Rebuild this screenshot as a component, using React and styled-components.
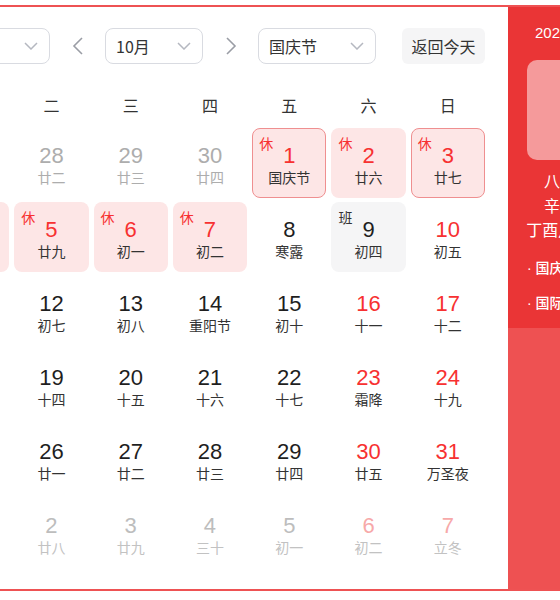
import React from "react";
import styled, { createGlobalStyle } from "styled-components";

const GlobalStyle = createGlobalStyle`
  html, body {
    margin: 0;
    padding: 0;
    overflow: hidden;
    background: #fff;
  }
  body {
    font-family: "Liberation Sans", "Noto Sans CJK SC", sans-serif;
  }
`;

const weekdays = ["一", "二", "三", "四", "五", "六", "日"];

// kind: p = previous month, c = current, n = next month
const rows = [
  [
    { d: 27, l: "廿一", k: "p" },
    { d: 28, l: "廿二", k: "p" },
    { d: 29, l: "廿三", k: "p" },
    { d: 30, l: "廿四", k: "p" },
    { d: 1, l: "国庆节", k: "c", red: true, tag: "休", ring: true },
    { d: 2, l: "廿六", k: "c", red: true, tag: "休" },
    { d: 3, l: "廿七", k: "c", red: true, tag: "休", ring: true },
  ],
  [
    { d: 4, l: "廿八", k: "c", red: true, tag: "休" },
    { d: 5, l: "廿九", k: "c", red: true, tag: "休" },
    { d: 6, l: "初一", k: "c", red: true, tag: "休" },
    { d: 7, l: "初二", k: "c", red: true, tag: "休" },
    { d: 8, l: "寒露", k: "c" },
    { d: 9, l: "初四", k: "c", tag: "班" },
    { d: 10, l: "初五", k: "c", red: true },
  ],
  [
    { d: 11, l: "初六", k: "c" },
    { d: 12, l: "初七", k: "c" },
    { d: 13, l: "初八", k: "c" },
    { d: 14, l: "重阳节", k: "c" },
    { d: 15, l: "初十", k: "c" },
    { d: 16, l: "十一", k: "c", red: true },
    { d: 17, l: "十二", k: "c", red: true },
  ],
  [
    { d: 18, l: "十三", k: "c" },
    { d: 19, l: "十四", k: "c" },
    { d: 20, l: "十五", k: "c" },
    { d: 21, l: "十六", k: "c" },
    { d: 22, l: "十七", k: "c" },
    { d: 23, l: "霜降", k: "c", red: true },
    { d: 24, l: "十九", k: "c", red: true },
  ],
  [
    { d: 25, l: "二十", k: "c" },
    { d: 26, l: "廿一", k: "c" },
    { d: 27, l: "廿二", k: "c" },
    { d: 28, l: "廿三", k: "c" },
    { d: 29, l: "廿四", k: "c" },
    { d: 30, l: "廿五", k: "c", red: true },
    { d: 31, l: "万圣夜", k: "c", red: true },
  ],
  [
    { d: 1, l: "廿七", k: "n" },
    { d: 2, l: "廿八", k: "n" },
    { d: 3, l: "廿九", k: "n" },
    { d: 4, l: "三十", k: "n" },
    { d: 5, l: "初一", k: "n" },
    { d: 6, l: "初二", k: "n", red: true },
    { d: 7, l: "立冬", k: "n", red: true },
  ],
];

function numberColor(cell) {
  if (cell.k === "p") return "#adadad";
  if (cell.k === "n") return cell.red ? "#f7a9a9" : "#bdbdbd";
  return cell.red ? "#f73131" : "#1f1f1f";
}

function lunarColor(cell) {
  if (cell.k === "p") return "#adadad";
  if (cell.k === "n") return "#c2c2c2";
  return "#333";
}

function ChevronDown() {
  return (
    <svg width="14" height="8" viewBox="0 0 14 8">
      <path d="M1 1 L7 7 L13 1" fill="none" stroke="#b5b8c0" strokeWidth="1.5" />
    </svg>
  );
}

function Chevron({ dir }) {
  const d = dir === "left" ? "M10 1 L2 9 L10 17" : "M2 1 L10 9 L2 17";
  return (
    <svg width="12" height="18" viewBox="0 0 12 18">
      <path d={d} fill="none" stroke="#9a9da5" strokeWidth="1.6" />
    </svg>
  );
}

function App() {
  return (
    <>
      <GlobalStyle />
      <Widget>
        <Main>
          <Toolbar>
            <Select $w={115}>
              <span>2021年</span>
              <ChevronDown />
            </Select>
            <ArrowButton>
              <Chevron dir="left" />
            </ArrowButton>
            <Select $w={98}>
              <span>10月</span>
              <ChevronDown />
            </Select>
            <ArrowButton>
              <Chevron dir="right" />
            </ArrowButton>
            <Select $w={118}>
              <span>国庆节</span>
              <ChevronDown />
            </Select>
            <TodayButton>返回今天</TodayButton>
          </Toolbar>

          <WeekHeader>
            {weekdays.map((w) => (
              <span key={w}>{w}</span>
            ))}
          </WeekHeader>

          <Days>
            {rows.flat().map((cell, i) => (
              <Cell key={i} $tag={cell.tag} $ring={cell.ring}>
                {cell.tag && <Tag $work={cell.tag === "班"}>{cell.tag}</Tag>}
                <Num style={{ color: numberColor(cell) }}>{cell.d}</Num>
                <Lunar style={{ color: lunarColor(cell) }}>{cell.l}</Lunar>
              </Cell>
            ))}
          </Days>
        </Main>

        <Panel>
          <PanelTop>
            <DateLine>2021-10-01 星期五</DateLine>
            <BigDay>1</BigDay>
            <LunarInfo>
              <div>八月廿五</div>
              <div>辛丑牛年</div>
              <div>丁酉月 壬午日</div>
            </LunarInfo>
            <Festival>· 国庆节</Festival>
            <Festival>· 国际音乐日</Festival>
          </PanelTop>
          <PanelBottom />
        </Panel>
      </Widget>
    </>
  );
}

const Widget = styled.div`
  display: flex;
  width: max-content;
  margin: 5px 0 0 -88px;
  border: 2px solid #ee5253;
`;

const Main = styled.div`
  width: 550px;
  padding: 21px 23px 21px 21px;
  background: #fff;
`;

const Toolbar = styled.div`
  display: flex;
  align-items: center;
  height: 36px;
`;

const Select = styled.div`
  box-sizing: border-box;
  width: ${(p) => p.$w}px;
  height: 36px;
  display: flex;
  align-items: center;
  justify-content: space-between;
  padding: 0 11px 0 10px;
  border: 1px solid #d9dbe1;
  border-radius: 8px;
  font-size: 16px;
  color: #333;
  font-family: "Noto Sans CJK SC", sans-serif;
`;

const ArrowButton = styled.div`
  width: 55px;
  height: 36px;
  display: flex;
  align-items: center;
  justify-content: center;
`;

const TodayButton = styled.div`
  margin-left: 26px;
  width: 83px;
  height: 36px;
  display: flex;
  align-items: center;
  justify-content: center;
  background: #f5f5f6;
  border-radius: 6px;
  font-size: 16px;
  color: #333;
  font-family: "Noto Sans CJK SC", sans-serif;
`;

const WeekHeader = styled.div`
  display: grid;
  grid-template-columns: repeat(7, 1fr);
  column-gap: 5px;
  margin: 26px 0 8px;
  line-height: 30px;
  text-align: center;
  font-size: 16px;
  color: #333;
  font-family: "Noto Sans CJK SC", sans-serif;
`;

const Days = styled.div`
  display: grid;
  grid-template-columns: repeat(7, 1fr);
  grid-auto-rows: 70px;
  gap: 4px 5px;
`;

const Cell = styled.div`
  position: relative;
  box-sizing: border-box;
  display: flex;
  flex-direction: column;
  align-items: center;
  padding-top: 15px;
  border-radius: 8px;
  border: 1px solid ${(p) => (p.$ring ? "#ef8f90" : "transparent")};
  background: ${(p) =>
    p.$tag === "休" ? "#fde6e6" : p.$tag === "班" ? "#f5f5f6" : "transparent"};
`;

const Tag = styled.span`
  position: absolute;
  top: 6px;
  left: 6px;
  font-size: 14px;
  line-height: 16px;
  color: ${(p) => (p.$work ? "#333" : "#f73131")};
  font-family: "Noto Sans CJK SC", sans-serif;
`;

const Num = styled.div`
  font-size: 22px;
  line-height: 24px;
  font-family: "Liberation Sans", sans-serif;
`;

const Lunar = styled.div`
  font-size: 14px;
  line-height: 18px;
  font-family: "Noto Sans CJK SC", sans-serif;
`;

const Panel = styled.div`
  width: 136px;
  display: flex;
  flex-direction: column;
  background: #ee5152;
`;

const PanelTop = styled.div`
  background: #ea3536;
  padding: 16px 0 15px;
  color: #fff;
  font-family: "Noto Sans CJK SC", sans-serif;
`;

const PanelBottom = styled.div`
  flex: 1;
`;

const DateLine = styled.div`
  padding-left: 27px;
  font-size: 15px;
  line-height: 20px;
  white-space: nowrap;
  font-family: "Liberation Sans", "Noto Sans CJK SC", sans-serif;
`;

const BigDay = styled.div`
  margin: 17px 19px 0;
  height: 100px;
  border-radius: 10px;
  background: rgba(255, 255, 255, 0.5);
  display: flex;
  align-items: center;
  justify-content: center;
  font-size: 56px;
  color: #ea3536;
  font-family: "Liberation Sans", sans-serif;
`;

const LunarInfo = styled.div`
  margin-top: 8px;
  text-align: center;
  font-size: 16px;
  line-height: 24.5px;
  white-space: nowrap;
`;

const Festival = styled.div`
  margin-top: 16px;
  padding-left: 19px;
  font-size: 14px;
  font-weight: 500;
  line-height: 20px;
  white-space: nowrap;
  font-family: "Liberation Sans", "Noto Sans CJK SC", sans-serif;
  & + & {
    margin-top: 15px;
  }
`;

export default App;
